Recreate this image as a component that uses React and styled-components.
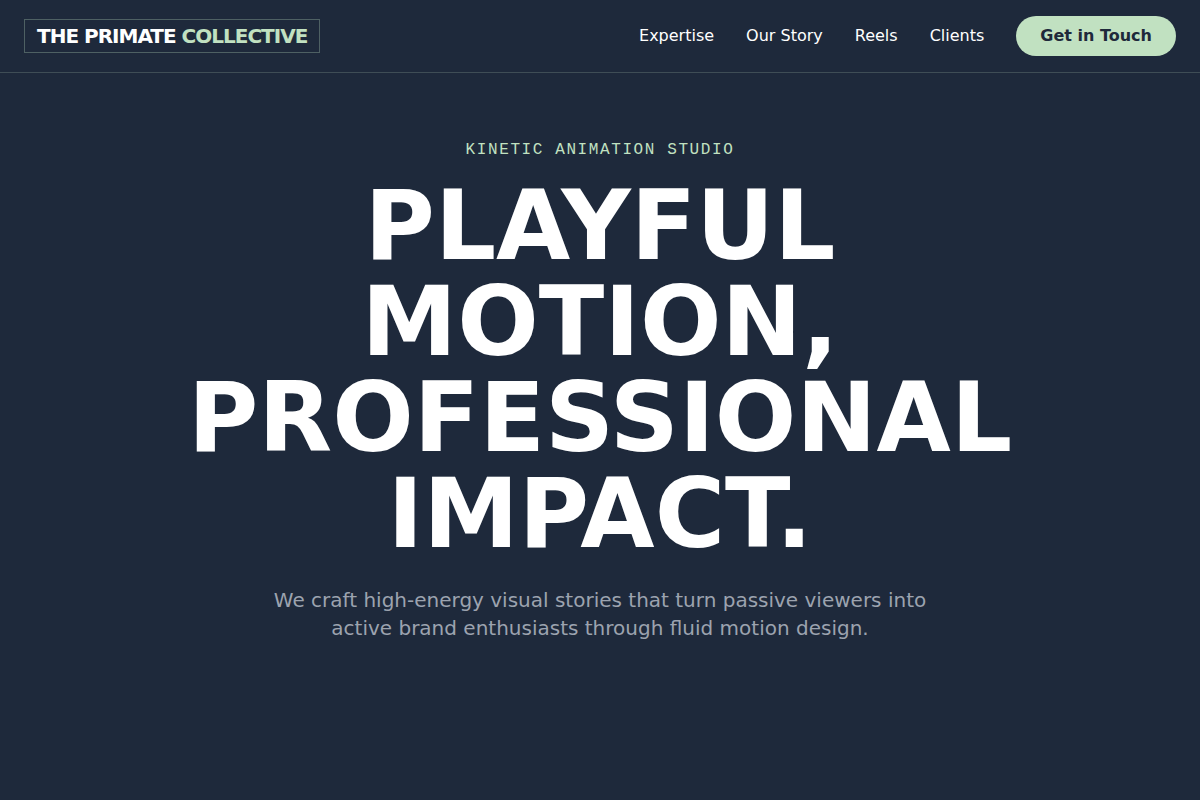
import React from 'react'
import styled, { createGlobalStyle } from 'styled-components'

const ink = '#1e293b'
const mint = '#c1e1c1'
const white = '#ffffff'
const muted = '#9ca3af'
const sans = `"DejaVu Sans", Verdana, sans-serif`
const mono = `"Liberation Mono", "Courier New", monospace`

const GlobalStyle = createGlobalStyle`
  *, *::before, *::after {
    box-sizing: border-box;
  }

  body {
    margin: 0;
    background: ${ink};
    color: ${white};
    font-family: ${sans};
    font-size: 16px;
    line-height: 24px;
  }
`

const Page = styled.div`
  min-height: 100vh;
  display: flex;
  flex-direction: column;
`

const Header = styled.header`
  display: flex;
  align-items: center;
  justify-content: space-between;
  padding: 16px 24px;
  border-bottom: 1px solid rgba(193, 225, 193, 0.2);
`

const Logo = styled.a`
  padding: 2px 12px;
  border: 1px solid rgba(193, 225, 193, 0.3);
  color: ${white};
  font-size: 20px;
  font-weight: 700;
  line-height: 28px;
  letter-spacing: -1px;
  text-decoration: none;
  white-space: nowrap;

  span {
    color: ${mint};
  }
`

const Nav = styled.nav`
  display: flex;
  align-items: center;
  gap: 32px;
`

const NavLink = styled.a`
  color: ${white};
  text-decoration: none;

  &:hover {
    color: ${mint};
  }
`

const ContactButton = styled.button`
  padding: 8px 24px;
  border: 0;
  border-radius: 20px;
  background: ${mint};
  color: ${ink};
  font: inherit;
  font-weight: 700;
  cursor: pointer;
`

const Hero = styled.main`
  flex: 1;
  display: flex;
  flex-direction: column;
  align-items: center;
  padding: 65px 24px;
  text-align: center;
`

const Eyebrow = styled.p`
  margin: 0 0 16px;
  color: ${mint};
  font-family: ${mono};
  letter-spacing: 0.1em;
  text-transform: uppercase;
`

const Title = styled.h1`
  max-width: 896px;
  margin: 0 0 24px;
  font-size: 96px;
  font-weight: 700;
  line-height: 96px;
  text-transform: uppercase;
`

const Lead = styled.p`
  max-width: 672px;
  margin: 0;
  color: ${muted};
  font-size: 20px;
  line-height: 28px;
`

const links = [
  { label: 'Expertise', href: '#expertise' },
  { label: 'Our Story', href: '#story' },
  { label: 'Reels', href: '#reels' },
  { label: 'Clients', href: '#clients' },
]

function App() {
  return (
    <Page>
      <GlobalStyle />
      <Header>
        <Logo href="#home">THE PRIMATE <span>COLLECTIVE</span></Logo>
        <Nav>
          {links.map(({ label, href }) => (
            <NavLink key={href} href={href}>{label}</NavLink>
          ))}
          <ContactButton type="button">Get in Touch</ContactButton>
        </Nav>
      </Header>
      <Hero>
        <Eyebrow>Kinetic Animation Studio</Eyebrow>
        <Title>Playful Motion, Professional Impact.</Title>
        <Lead>
          We craft high-energy visual stories that turn passive viewers into
          active brand enthusiasts through fluid motion design.
        </Lead>
      </Hero>
    </Page>
  )
}

export default App
